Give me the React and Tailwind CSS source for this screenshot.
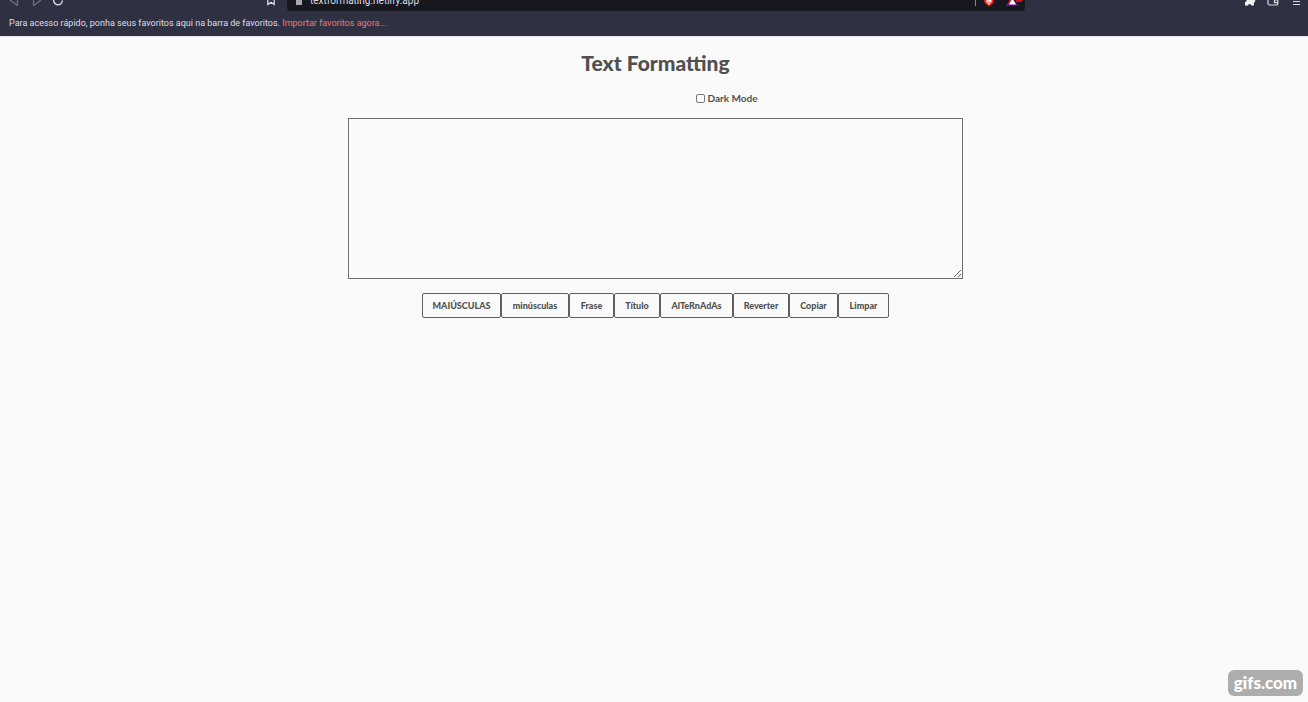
import { useState } from "react";

const actions = [
  { label: "MAIÚSCULAS", width: "w-[79px]", run: (t) => t.toUpperCase() },
  { label: "minúsculas", width: "w-[68px]", run: (t) => t.toLowerCase() },
  { label: "Frase", width: "w-[45px]", run: (t) => t.charAt(0).toUpperCase() + t.slice(1).toLowerCase() },
  { label: "Título", width: "w-[46px]", run: (t) => t.toLowerCase().replace(/(^|\s)\S/g, (c) => c.toUpperCase()) },
  { label: "AlTeRnAdAs", width: "w-[73px]", run: (t) => [...t].map((c, i) => (i % 2 ? c.toLowerCase() : c.toUpperCase())).join("") },
  { label: "Reverter", width: "w-[56px]", run: (t) => [...t].reverse().join("") },
  { label: "Copiar", width: "w-[49px]", run: (t) => { navigator.clipboard?.writeText(t); return t; } },
  { label: "Limpar", width: "w-[51px]", run: () => "" },
];

const iconButton = "flex h-3 w-3 shrink-0 items-center justify-center";

function Toolbar() {
  return (
    <div className="flex h-[11px] items-end overflow-hidden pr-1.5 pl-2">
      <div className="flex w-[279px] shrink-0 items-end pr-[10px] pb-[5px]">
        <button aria-label="Voltar" className={iconButton}>
          <svg viewBox="0 0 12 12" className="h-3 w-3" fill="none" stroke="#6e6f7b" strokeWidth="1.3" strokeLinejoin="round"><path d="M9.500 1v10.500L2.500 6.500z" /></svg>
        </button>
        <button aria-label="Avançar" className={iconButton + " ml-3"}>
          <svg viewBox="0 0 12 12" className="h-3 w-3" fill="none" stroke="#6e6f7b" strokeWidth="1.3" strokeLinejoin="round"><path d="M1.500 1v10.500L8.500 6.500z" /></svg>
        </button>
        <button aria-label="Recarregar" className={iconButton + " ml-2"}>
          <svg viewBox="0 0 12 12" className="h-3 w-3" fill="none" stroke="#d8d9e0" strokeWidth="1.4" strokeLinecap="round"><path d="M10.300 7A4.300 4.300 0 1 1 8.600 3M8.800.8V3.200H6.400" /></svg>
        </button>
        <button aria-label="Adicionar aos favoritos" className={iconButton + " ml-auto"}>
          <svg viewBox="0 0 12 12" className="h-3 w-3" fill="none" stroke="#d8d9e0" strokeWidth="1.3"><path d="M2.800 1h6.400v9.600L6 8.300 2.800 10.600z" /></svg>
        </button>
      </div>
      <div className="flex h-4 w-[57%] shrink-0 items-end rounded-b-sm bg-[#171720] pr-[2px] pl-[9px]">
        <svg viewBox="0 0 6 10" className="mb-[6px] h-[10px] w-[6px]" fill="none"><path d="M1.500 5V3a1.500 1.500 0 0 1 3 0v2" stroke="#a6a7ac" /><path d="M0 5h6v5H0z" fill="#a6a7ac" /></svg>
        <span className="mb-[3px] ml-2 font-[Roboto,sans-serif] text-[10px] leading-[14px] text-[#dcdde3]">textformating.netlify.app</span>
        <span className="mb-[5px] ml-auto h-3 w-px bg-[#85868f]" />
        <svg viewBox="0 0 12 14" className="mb-[4px] ml-[7px] h-[14px] w-3"><path d="M2 1h8l1.500 3-1.200 6L6 13.500 1.700 10 .5 4z" fill="#f01e1c" /><path d="M3 4h6l-.4 5L6 12 3.400 9z" fill="#ffd5cd" /><path d="M4.500 9h3L6 10.500z" fill="#ed6457" /></svg>
        <svg viewBox="0 0 17 14" className="mb-[4px] ml-[11px] h-[14px] w-[17px]"><path d="M6.500 3v10H0z" fill="#ed1c24" /><path d="M0 13h13L10 9H5z" fill="#76008f" /><path d="M6.500 5l3.500 6.500H3z" fill="#fff" /><path d="M8 1h6.500a2 2 0 0 1 2 2v4a2 2 0 0 1-2 2H10z" fill="#e80d14" /></svg>
      </div>
      <div className="ml-auto flex items-end gap-[11px] pb-[5px]">
        <button aria-label="Extensões" className={iconButton}>
          <svg viewBox="0 0 12 12" className="h-3 w-3" fill="#f1f1f5"><path d="M1 2h3a1.700 1.700 0 1 1 3.400 0h2.500v3a1.800 1.800 0 0 1 0 3.500V11.500H7.300a1.600 1.600 0 0 0-3.200 0H1V8a1.600 1.600 0 0 0 0-3.200z" /></svg>
        </button>
        <button aria-label="Carteira" className={iconButton}>
          <svg viewBox="0 0 12 12" className="h-3 w-3" fill="none" stroke="#d8d9e0" strokeWidth="1.2"><path d="M1 2.500v7Q1 11 2.500 11h7q1.300 0 1.300-1.300V4.500Q10.800 3.500 9.700 3.500H1M1 2.500Q1 1.300 2.300 1.300H9v2M11 5.800H7.500v2.800H11" /></svg>
        </button>
        <button aria-label="Menu" className={iconButton}>
          <svg viewBox="0 0 12 12" className="h-3 w-3" stroke="#d8d9e0" strokeWidth="1.2"><path d="M3 4.500h7M3 7.500h7M3 10.500h7" /></svg>
        </button>
      </div>
    </div>
  );
}

export default function App() {
  const [text, setText] = useState("");
  const [dark, setDark] = useState(false);

  return (
    <div className={"flex min-h-screen flex-col font-[Lato,sans-serif] " + (dark ? "bg-[#222222] text-[#eeeeee]" : "bg-[#fafafa] text-[#505050]")}>
      <header className="bg-[#2f3142]">
        <Toolbar />
        <p className="h-[25px] pl-[9px] font-[Roboto,sans-serif] text-[9px] leading-[24px] whitespace-nowrap text-[#dedfe7]">
          Para acesso rápido, ponha seus favoritos aqui na barra de favoritos.{" "}
          <a href="#importar" className="text-[#ec7474]">Importar favoritos agora...</a>
        </p>
      </header>
      <main className="flex grow flex-col items-center border-t border-[#e6e8f2] pt-[9px] pl-[3px]">
        <h1 className="text-[21px] leading-[34px] font-black">Text Formatting</h1>
        <label className="mt-[11px] ml-[143px] flex h-[14px] items-center gap-[2px] text-[10px] leading-[14px] font-bold">
          <input
            type="checkbox"
            checked={dark}
            onChange={(e) => setDark(e.target.checked)}
            className="h-[9px] w-[9px] appearance-none rounded-[2px] border border-[#777777] bg-white checked:bg-[#4477cc]"
          />
          Dark Mode
        </label>
        <textarea
          aria-label="Texto"
          value={text}
          onChange={(e) => setText(e.target.value)}
          className="mt-[13px] block h-[161px] w-[47.1%] resize border border-[#707070] bg-transparent p-2 text-sm outline-none"
        />
        <div className="mt-[14px] flex flex-wrap justify-center">
          {actions.map((a) => (
            <button
              key={a.label}
              onClick={() => setText(a.run(text))}
              className={"h-[25px] rounded-[2px] border border-[#606060] text-center text-[9px] leading-[23px] font-black " + a.width}
            >
              {a.label}
            </button>
          ))}
        </div>
        <div className="mt-auto mr-[5px] mb-[6px] flex h-[26px] w-[75px] items-center justify-center self-end rounded-[6px] bg-[#adadad] pb-px text-[17px] leading-none font-black text-white">
          gifs.com
        </div>
      </main>
    </div>
  );
}
